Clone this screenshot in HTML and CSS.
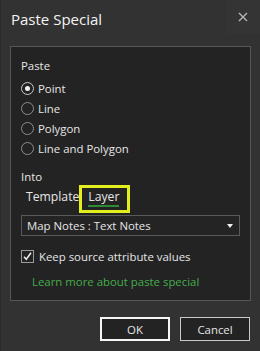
FILE: index.html
```html
<!DOCTYPE html>
<html lang="en">
  <head>
    <meta charset="UTF-8">
    <title>Paste Special</title>
    <link rel="stylesheet" href="styles.css">
  </head>
  <body>
    <div class="dialog">
      <header class="row header">
        <p class="title">Paste Special</p>
        <div class="space"></div>
        <div class="close">
          <svg width="10" height="10" viewBox="0 0 10 10"><path d="M1 1L9 9M9 1L1 9" stroke="#b4b4b4" stroke-width="1.4"/></svg>
        </div>
      </header>
      <main class="panel">
        <p class="label">Paste</p>
        <div class="options">
          <div class="row option"><span class="radio checked"></span><p>Point</p></div>
          <div class="row option"><span class="radio"></span><p>Line</p></div>
          <div class="row option"><span class="radio"></span><p>Polygon</p></div>
          <div class="row option"><span class="radio"></span><p>Line and Polygon</p></div>
        </div>
        <p class="label label-into">Into</p>
        <div class="row tabs">
          <p class="tab tab-plain">Template</p>
          <div class="tab-box"><p class="tab tab-active">Layer</p></div>
        </div>
        <div class="row select">
          <p>Map Notes : Text Notes</p>
          <div class="space"></div>
          <svg width="6" height="4" viewBox="0 0 6 4"><path d="M0 0H6L3 4Z" fill="#f0f0f0"/></svg>
        </div>
        <div class="row check-row">
          <span class="check">
            <svg width="11" height="11" viewBox="0 0 11 11"><path d="M2 5.8L4.3 8.3L9 1.8" stroke="#eeeeee" stroke-width="1.5" fill="none"/></svg>
          </span>
          <p>Keep source attribute values</p>
        </div>
        <p class="link"><a href="#">Learn more about paste special</a></p>
      </main>
      <footer class="row buttons">
        <div class="space"></div>
        <button class="button button-focus">OK</button>
        <button class="button">Cancel</button>
      </footer>
    </div>
  </body>
</html>
```
FILE: styles.css
```css
body {
  background-color: #323232;
  color: #e6e6e6;
  font-family: "Open Sans", sans-serif;
  font-size: 11.4px;
  margin: 0;
}
p {
  margin: 0;
}
a {
  color: inherit;
  text-decoration: none;
}
.row {
  display: flex;
  align-items: center;
}
.space {
  flex-grow: 1;
}
.dialog {
  border-left: 1px solid #2a2a2a;
  box-sizing: border-box;
  height: 351px;
  width: 260px;
}
.header {
  align-items: flex-start;
  height: 46px;
}
.title {
  color: #f4f4f4;
  font-size: 15px;
  line-height: 20px;
  padding: 9px 0 0 10px;
}
.close {
  align-items: center;
  background-color: #343434;
  display: flex;
  height: 34px;
  justify-content: center;
  width: 34px;
}
.panel {
  background-color: #232323;
  border: 1px solid #565656;
  margin: 0 9px 0 9px;
  padding: 9px 10px 8px 10px;
}
.label {
  line-height: 20px;
}
.options {
  margin-top: 2px;
}
.option {
  height: 20px;
}
.radio {
  border: 1px solid #8c8c8c;
  border-radius: 50%;
  box-sizing: border-box;
  height: 13px;
  margin-right: 4px;
  position: relative;
  width: 13px;
}
.checked {
  border-color: #c8c8c8;
}
.checked::after {
  background-color: #f2f2f2;
  border-radius: 50%;
  content: "";
  height: 5px;
  left: 3px;
  position: absolute;
  top: 3px;
  width: 5px;
}
.label-into {
  line-height: 16px;
  margin-top: 11px;
}
.tabs {
  align-items: flex-start;
  height: 28px;
  padding-left: 5px;
}
.tab {
  font-size: 12.2px;
  line-height: 16px;
}
.tab-plain {
  padding-top: 4px;
}
.tab-box {
  align-items: flex-start;
  border: 3px solid #e2ef1d;
  box-sizing: border-box;
  display: flex;
  height: 28px;
  padding: 0 8px 0 6px;
}
.tab-active {
  border-bottom: 2px solid #2f8a34;
  padding-top: 1px;
}
.select {
  background-color: #242424;
  border: 1px solid #5a5a5a;
  height: 19px;
  margin-top: 2px;
  padding: 0 6px 0 5px;
}
.check-row {
  height: 20px;
  margin-top: 10px;
}
.check {
  align-items: center;
  border: 1px solid #9a9a9a;
  box-sizing: border-box;
  display: flex;
  height: 13px;
  justify-content: center;
  margin-right: 5px;
  width: 13px;
}
.link {
  color: #45ad4c;
  line-height: 20px;
  margin-top: 6px;
  padding-left: 11px;
}
.buttons {
  gap: 10px;
  margin-top: 16px;
  padding-right: 10px;
}
.button {
  background-color: #232323;
  border: 1px solid #c8c8c8;
  color: #e6e6e6;
  font-family: "Open Sans", sans-serif;
  font-size: 11.4px;
  height: 24px;
  padding: 0;
  width: 70px;
}
.button-focus {
  border: 2px solid #f5f5f5;
}
```
